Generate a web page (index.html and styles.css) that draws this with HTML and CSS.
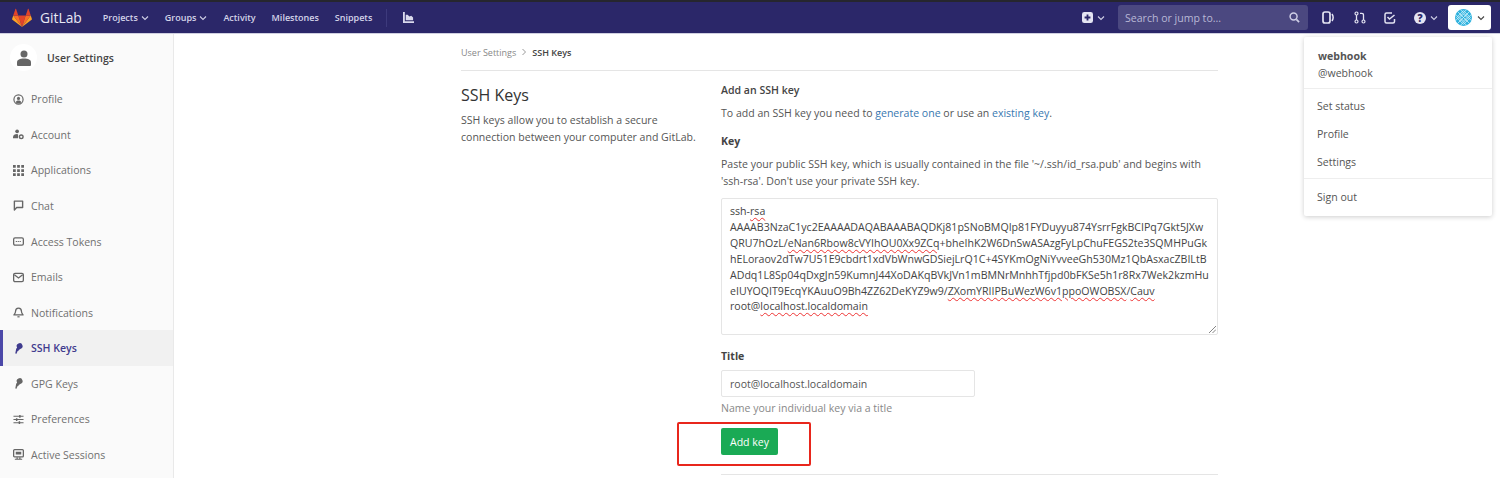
FILE: index.html
```html
<!DOCTYPE html>
<html lang="en">
<head>
<meta charset="utf-8">
<title>SSH Keys · User Settings · GitLab</title>
<link rel="stylesheet" href="styles.css">
</head>
<body>
<header class="navbar">
  <a class="brand">
    <svg class="logo" width="20" height="19" viewBox="0 0 20 19"><path fill="#e24329" d="M10 19l3.700-11.400H6.300z"/><path fill="#fc6d26" d="M10 19L6.300 7.600H1.200z"/><path fill="#fca326" d="M1.200 7.600L.1 11c-.1.3 0 .6.3.8L10 19z"/><path fill="#e24329" d="M1.200 7.600h5.100L4.100.9c-.1-.3-.6-.3-.7 0z"/><path fill="#fc6d26" d="M10 19l3.700-11.400h5.100z"/><path fill="#fca326" d="M18.800 7.600l1.100 3.400c.1.3 0 .6-.3.8L10 19z"/><path fill="#e24329" d="M18.800 7.600h-5.100L15.900.9c.1-.3.6-.3.7 0z"/></svg>
    <span class="brand-name">GitLab</span>
  </a>
  <nav class="nav-links">
    <a class="nav-link">Projects <svg class="chev" viewBox="0 0 8 6"><path d="M1 1.500l3 3 3-3"/></svg></a>
    <a class="nav-link">Groups <svg class="chev" viewBox="0 0 8 6"><path d="M1 1.500l3 3 3-3"/></svg></a>
    <a class="nav-link">Activity</a>
    <a class="nav-link">Milestones</a>
    <a class="nav-link">Snippets</a>
    <span class="nav-sep"></span>
    <svg class="nav-icon chart" viewBox="0 0 12 12"><path fill="#d9d9ec" d="M0 0h2v10h10v2H0z"/><path fill="#d9d9ec" d="M3 3h2l2 2 2-1 2 2v3H3z"/></svg>
  </nav>
  <div class="nav-right">
    <svg class="nav-icon plus" viewBox="0 0 12 12"><rect width="12" height="12" rx="2.500" fill="#e4e4f2"/><path d="M6 2.800v6.400M2.800 6h6.400" stroke="#2b2769" stroke-width="2"/></svg>
    <svg class="chev chev-plus" viewBox="0 0 8 6"><path d="M1 1.500l3 3 3-3"/></svg>
    <div class="search">
      <span>Search or jump to...</span>
      <svg class="search-icon" viewBox="0 0 12 12"><circle cx="5" cy="5" r="3.800" fill="none" stroke="#cfcfe6" stroke-width="1.600"/><path d="M8 8l3 3" stroke="#cfcfe6" stroke-width="1.800"/></svg>
    </div>
    <svg class="nav-icon issues" viewBox="0 0 12 13"><rect x="1" y="1" width="7" height="11" rx="2" fill="none" stroke="#e4e4f2" stroke-width="1.700"/><path d="M10 3c1.300 2 1.300 5 0 7" fill="none" stroke="#e4e4f2" stroke-width="1.500"/></svg>
    <svg class="nav-icon mr" viewBox="0 0 12 13"><circle cx="2.500" cy="2.500" r="1.500" fill="none" stroke="#e4e4f2" stroke-width="1.200"/><circle cx="2.500" cy="10.500" r="1.500" fill="none" stroke="#e4e4f2" stroke-width="1.200"/><circle cx="9.500" cy="10.500" r="1.500" fill="none" stroke="#e4e4f2" stroke-width="1.200"/><path d="M2.500 4v5M9.500 9V4c0-1-.6-1.700-1.700-1.700H6" fill="none" stroke="#e4e4f2" stroke-width="1.300"/></svg>
    <svg class="nav-icon todo" viewBox="0 0 12 12"><path d="M10.500 7v2.500a1.500 1.500 0 0 1-1.500 1.500H2.500a1.500 1.500 0 0 1-1.500-1.500V2.500A1.500 1.500 0 0 1 2.500 1H8" fill="none" stroke="#e4e4f2" stroke-width="1.500"/><path d="M3.500 5l2 2 5-4" fill="none" stroke="#e4e4f2" stroke-width="1.500"/></svg>
    <span class="help-wrap">
      <span class="help">?</span>
      <svg class="chev" viewBox="0 0 8 6"><path d="M1 1.500l3 3 3-3"/></svg>
    </span>
    <span class="avatar-btn">
      <svg class="avatar" viewBox="0 0 16 16"><circle cx="8" cy="8" r="8" fill="#2fb2de"/><g stroke="#d9f3fb" stroke-width=".7" fill="none"><path d="M1.500 1.500l13 13M14.500 1.500l-13 13"/><path d="M8 1.500L14.500 8 8 14.500 1.500 8z"/><path d="M8 4.800L11.200 8 8 11.200 4.800 8z"/><path d="M4.500 0L16 11.500M11.500 0L0 11.500M0 4.500L11.500 16M16 4.500L4.500 16"/></g></svg>
      <svg class="chev dark" viewBox="0 0 8 6"><path d="M1 1.500l3 3 3-3"/></svg>
    </span>
  </div>
</header>

<div class="layout">
  <aside class="sidebar">
    <div class="side-head">
      <span class="side-avatar">
        <svg width="16" height="16" viewBox="0 0 16 16"><circle cx="8" cy="4" r="3.500" fill="#666"/><path fill="#666" d="M1 12.500C1 9.500 4 8.500 8 8.500s7 1 7 4V15a1 1 0 0 1-1 1H2a1 1 0 0 1-1-1z"/></svg>
      </span>
      <span class="side-title">User Settings</span>
    </div>
    <ul class="side-list">
      <li class="side-item"><svg viewBox="0 0 12 12"><circle cx="6" cy="6" r="5" fill="none" stroke="#666" stroke-width="1.300"/><circle cx="6" cy="4.800" r="1.700" fill="#666"/><path fill="#666" d="M2.800 9c.5-1.500 1.800-2 3.200-2s2.700.5 3.200 2c-1 1-2 1.300-3.200 1.300S3.800 10 2.800 9z"/></svg>Profile</li>
      <li class="side-item"><svg viewBox="0 0 12 12"><circle cx="4.500" cy="2.500" r="2" fill="#666"/><path fill="#666" d="M0 9c0-2.500 2-3.500 4.500-3.500l1 .5V10H0z"/><circle cx="9" cy="8.500" r="2" fill="none" stroke="#666" stroke-width="1.500"/></svg>Account</li>
      <li class="side-item"><svg viewBox="0 0 12 12"><path fill="#666" d="M0 0h3v3H0zM4.500 0h3v3h-3zM9 0h3v3H9zM0 4.500h3v3H0zM4.500 4.500h3v3h-3zM9 4.500h3v3H9zM0 9h3v3H0zM4.500 9h3v3h-3zM9 9h3v3H9z"/></svg>Applications</li>
      <li class="side-item"><svg viewBox="0 0 12 12"><path d="M1.500 1.200h9v7H4L1.500 11z" fill="none" stroke="#666" stroke-width="1.500" stroke-linejoin="round"/></svg>Chat</li>
      <li class="side-item"><svg viewBox="0 0 12 12"><rect x=".7" y="2" width="10.600" height="8" rx="1.500" fill="none" stroke="#666" stroke-width="1.400"/><path d="M3 6h6" stroke="#666" stroke-width="1.300" stroke-dasharray="1.300 .8"/></svg>Access Tokens</li>
      <li class="side-item"><svg viewBox="0 0 12 12"><rect x=".7" y="1.500" width="10.600" height="9" rx="1.500" fill="none" stroke="#666" stroke-width="1.400"/><path d="M1.500 3l4.500 3.500L10.500 3" fill="none" stroke="#666" stroke-width="1.400"/></svg>Emails</li>
      <li class="side-item"><svg viewBox="0 0 12 12"><path d="M6 1.200c2 0 3.200 1.500 3.200 3.500 0 2 1.300 3.300 1.800 4H1c.5-.7 1.800-2 1.800-4 0-2 1.200-3.500 3.200-3.500z" fill="none" stroke="#666" stroke-width="1.400" stroke-linejoin="round"/><path d="M4.800 10.700h2.400" stroke="#666" stroke-width="1.300"/></svg>Notifications</li>
      <li class="side-item active"><svg viewBox="0 0 12 12"><path fill="#3f3b8e" d="M3.500 12l-1-.7 1-5 1-1.300A3.200 3.200 0 1 1 8 6.500L6.300 7.500l-.5 1.300-1 .2-.3 1.200z"/></svg>SSH Keys</li>
      <li class="side-item"><svg viewBox="0 0 12 12"><path fill="#666" d="M3.500 12l-1-.7 1-5 1-1.300A3.200 3.200 0 1 1 8 6.500L6.300 7.500l-.5 1.300-1 .2-.3 1.200z"/></svg>GPG Keys</li>
      <li class="side-item"><svg viewBox="0 0 12 12"><path d="M.5 2.500h11M.5 6h11M.5 9.500h11" stroke="#666" stroke-width="1.100"/><path d="M7.500 1v3M4 4.500v3M7 8v3" stroke="#666" stroke-width="1.600"/></svg>Preferences</li>
      <li class="side-item"><svg viewBox="0 0 12 12"><rect x=".7" y=".7" width="10.600" height="7.800" rx="1" fill="none" stroke="#666" stroke-width="1.400"/><rect x="3" y="3" width="6" height="3" fill="#666"/><path d="M2 11.200h8M4.500 9v2M7.500 9v2" stroke="#666" stroke-width="1.300"/></svg>Active Sessions</li>
    </ul>
  </aside>

  <main class="main">
    <div class="crumbs">
      <span class="crumb">User Settings</span>
      <svg class="crumb-sep" viewBox="0 0 6 8"><path d="M1.500 1l3 3-3 3" fill="none" stroke="#999" stroke-width="1"/></svg>
      <span class="crumb-now">SSH Keys</span>
    </div>
    <div class="row">
      <section class="intro">
        <h1>SSH Keys</h1>
        <p>SSH keys allow you to establish a secure connection between your computer and GitLab.</p>
      </section>
      <section class="form">
        <h2>Add an SSH key</h2>
        <p class="add-line">To add an SSH key you need to <a>generate one</a> or use an <a>existing key</a>.</p>
        <h3 class="key-label">Key</h3>
        <p class="key-help">Paste your public SSH key, which is usually contained in the file '~/.ssh/id_rsa.pub' and begins with 'ssh-rsa'. Don't use your private SSH key.</p>
        <div class="keybox">
          ssh-<span class="sp">rsa</span><br>
          AAAAB3NzaC1yc2EAAAADAQABAAABAQDKj81pSNoBMQIp81FYDuyyu874YsrrFgkBCIPq7Gkt5JXw<br>
          QRU7hOzL/<span class="sp">eNan6Rbow8cVYIhOU0Xx9ZCq</span>+bheIhK2W6DnSwASAzgFyLpChuFEGS2te3SQMHPuGk<br>
          hELoraov2dTw7U51E9cbdrt1xdVbWnwGDSiejLrQ1C+4SYKmOgNiYvveeGh530Mz1QbAsxacZBILtB<br>
          ADdq1L8Sp04qDxgJn59KumnJ44XoDAKqBVkJVn1mBMNrMnhhTfjpd0bFKSe5h1r8Rx7Wek2kzmHu<br>
          eIUYOQIT9EcqYKAuuO9Bh4ZZ62DeKYZ9w9/<span class="sp">ZXomYRIIPBuWezW6v1ppoOWOBSX</span>/<span class="sp">Cauv</span><br>
          root@<span class="sp">localhost.localdomain</span>
          <svg class="grip" viewBox="0 0 8 8"><path d="M1 8l7-7M4.500 8L8 4.500" stroke="#777" stroke-width=".9"/></svg>
        </div>
        <h3 class="title-label">Title</h3>
        <div class="title-input">root@localhost.localdomain</div>
        <p class="hint">Name your individual key via a title</p>
        <div class="btn-wrap">
          <button class="btn">Add key</button>
          <span class="redbox"></span>
        </div>
        <hr class="divider">
      </section>
    </div>
  </main>
</div>

<div class="dropdown">
  <div class="dd-user"><strong>webhook</strong><span>@webhook</span></div>
  <div class="dd-group">
    <div class="dd-item">Set status</div>
    <div class="dd-item">Profile</div>
    <div class="dd-item">Settings</div>
  </div>
  <div class="dd-last"><div class="dd-item">Sign out</div></div>
</div>
</body>
</html>
```

FILE: styles.css
```css
* { box-sizing: border-box; }
html, body { margin: 0; height: 478px; overflow: hidden; }
body { font-family: "Open Sans", "Noto Sans", sans-serif; font-size: 10.550px; color: #555; background: #fff; }
h1, h2, h3, p, ul { margin: 0; padding: 0; }

.navbar { height: 34px; display: flex; align-items: center; background: #2b2769; border-top: 2px solid #26262e; border-bottom: 1px solid #cfcfe0; padding: 0 9px 0 12px; }
.brand { display: flex; align-items: center; gap: 8px; }
.logo { display: block; }
.brand-name { font-size: 13.800px; color: #e8e8f4; }
.nav-links { display: flex; align-items: center; margin-left: 21px; }
.nav-link { color: #d3d3e8; font-size: 9px; font-weight: 600; margin-right: 16px; display: flex; align-items: center; gap: 3px; white-space: nowrap; }
.chev { width: 8px; height: 6px; fill: none; stroke: #cfcfe6; stroke-width: 1.100; }
.chev.dark { stroke: #444; }
.nav-sep { width: 1px; height: 18px; margin-left: -2px; background: #3d3a7c; }
.nav-icon { display: block; width: 12px; height: 12px; }
.chart { margin-left: 16px; width: 11px; height: 11px; }
.nav-right { margin-left: auto; display: flex; align-items: center; }
.plus { width: 11px; height: 11px; margin-right: 4px; }
.chev-plus { margin-right: 13px; }
.search { width: 190px; height: 25px; background: #4b4880; border-radius: 3px; display: flex; align-items: center; justify-content: space-between; padding: 0 8px 0 7px; color: #b9b8d6; font-size: 10.550px; margin-right: 14px; }
.search-icon { width: 11px; height: 11px; }
.issues { width: 12px; height: 13px; margin-right: 20px; }
.mr { width: 12px; height: 13px; margin-right: 18px; }
.todo { margin-right: 18px; }
.help-wrap { display: flex; align-items: center; gap: 4px; margin-right: 10px; }
.help { width: 12px; height: 12px; border-radius: 50%; background: #e4e4f2; color: #2b2769; font-size: 10px; font-weight: 800; line-height: 12px; text-align: center; }
.avatar-btn { width: 43px; height: 25px; background: #fff; border-radius: 3px; display: flex; align-items: center; gap: 5px; padding-left: 7px; }
.avatar { width: 17px; height: 17px; }

.layout { display: flex; height: 444px; }
.sidebar { width: 174px; flex: none; background: #fafafa; border-right: 1px solid #e9e9e9; }
.side-head { height: 47.500px; display: flex; align-items: center; padding-left: 10px; }
.side-avatar { width: 27px; height: 27px; background: #fff; border-radius: 50%; display: flex; align-items: center; justify-content: center; }
.side-title { margin-left: 10px; font-size: 10.500px; font-weight: 600; color: #444; }
.side-list { list-style: none; }
.side-item { height: 35.570px; display: flex; align-items: center; padding-left: 13px; color: #707070; gap: 7px; }
.side-item svg { width: 11px; height: 11px; flex: none; }
.side-item.active { background: #f1f1f1; color: #3f3b8e; font-weight: 600; box-shadow: inset 3px 0 0 #4b48a8; }

.main { flex: 1; padding-left: 287px; }
.crumbs { width: 757px; height: 37px; display: flex; align-items: center; border-bottom: 1px solid #e5e5e5; font-size: 9px; }
.crumb { color: #888; }
.crumb-sep { width: 6px; height: 8px; margin: 0 5px; }
.crumb-now { color: #444; font-weight: 600; }
.row { width: 757px; display: flex; }
.intro { width: 260px; flex: none; padding-top: 12px; }
.intro h1 { font-size: 16px; font-weight: 500; color: #333; line-height: 24px; }
.intro p { width: 240px; margin-top: 5px; line-height: 17px; color: #555; }
.form { flex: 1; min-width: 0; padding-top: 11px; }
.form h2 { font-size: 10.550px; font-weight: 600; color: #444; line-height: 17px; }
.add-line { margin-top: 6px; line-height: 17px; }
.add-line a { color: #3777b0; }
.key-label { margin-top: 11px; font-size: 10.550px; font-weight: 700; color: #444; line-height: 17px; }
.key-help { margin-top: 6px; line-height: 17px; color: #555; }
.keybox { position: relative; margin-top: 8px; height: 137px; border: 1px solid #e5e5e5; border-radius: 2px; padding: 5px 8px; font-size: 10.600px; line-height: 15.900px; color: #444; white-space: nowrap; }
.sp { text-decoration: underline wavy #e33; text-decoration-thickness: 1px; text-underline-offset: 2px; }
.grip { position: absolute; right: 1px; bottom: 1px; width: 8px; height: 8px; }
.title-label { margin-top: 13px; font-size: 10.550px; font-weight: 700; color: #444; line-height: 17px; }
.title-input { margin-top: 5px; width: 254px; height: 27px; border: 1px solid #e5e5e5; border-radius: 2px; display: flex; align-items: center; padding-left: 8px; color: #555; }
.hint { margin-top: 3px; color: #888; line-height: 17px; }
.btn-wrap { position: relative; margin-top: 11px; }
.btn { display: block; width: 57px; height: 27px; border: 0; border-radius: 2px; background: #1aaa55; color: #fff; font: 10.550px "Open Sans", "Noto Sans", sans-serif; padding: 0; }
.redbox { position: absolute; left: -44px; top: -6px; width: 134px; height: 44px; border: 2px solid #e8261c; border-radius: 2px; }
.divider { margin: 19px 0 0; border: 0; border-top: 1px solid #e5e5e5; }

.dropdown { position: absolute; left: 1304px; top: 37px; width: 188px; height: 179px; background: #fff; border-radius: 2px; box-shadow: 0 1px 5px rgba(0,0,0,.2); color: #555; }
.dd-user { height: 52px; padding: 12px 14px 0; border-bottom: 1px solid #eee; display: flex; flex-direction: column; gap: 2px; line-height: 15px; }
.dd-user strong { font-weight: 700; color: #555; }
.dd-group { padding: 3px 0 0; height: 90px; border-bottom: 1px solid #eee; }
.dd-item { height: 27.900px; display: flex; align-items: center; padding-left: 13px; }
.dd-last { padding-top: 4px; }
```
